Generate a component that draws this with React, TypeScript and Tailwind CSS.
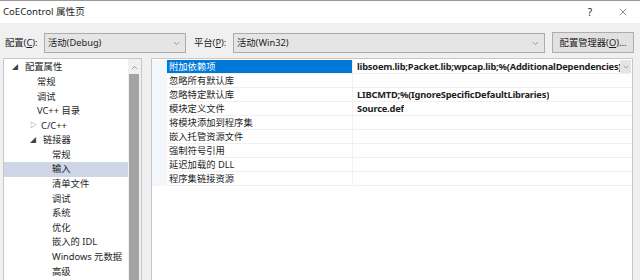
import { ChevronDown, ChevronUp, X } from 'lucide-react';

const font = { fontFamily: '"Noto Sans", "Noto Sans CJK SC", sans-serif' };

type TreeItem = { label: string; indent: number; arrow?: 'open' | 'closed'; selected?: boolean };

const tree: TreeItem[] = [
  { label: '配置属性', indent: 0, arrow: 'open' },
  { label: '常规', indent: 1 },
  { label: '调试', indent: 1 },
  { label: 'VC++ 目录', indent: 1 },
  { label: 'C/C++', indent: 1, arrow: 'closed' },
  { label: '链接器', indent: 1, arrow: 'open' },
  { label: '常规', indent: 2 },
  { label: '输入', indent: 2, selected: true },
  { label: '清单文件', indent: 2 },
  { label: '调试', indent: 2 },
  { label: '系统', indent: 2 },
  { label: '优化', indent: 2 },
  { label: '嵌入的 IDL', indent: 2 },
  { label: 'Windows 元数据', indent: 2 },
  { label: '高级', indent: 2 },
];

const props: { name: string; value?: string }[] = [
  { name: '附加依赖项', value: 'libsoem.lib;Packet.lib;wpcap.lib;%(AdditionalDependencies)' },
  { name: '忽略所有默认库' },
  { name: '忽略特定默认库', value: 'LIBCMTD;%(IgnoreSpecificDefaultLibraries)' },
  { name: '模块定义文件', value: 'Source.def' },
  { name: '将模块添加到程序集' },
  { name: '嵌入托管资源文件' },
  { name: '强制符号引用' },
  { name: '延迟加载的 DLL' },
  { name: '程序集链接资源' },
];

function Select({ value, width }: { value: string; width: string }) {
  return (
    <div className={`${width} h-[20px] bg-[#e5e5e5] border border-[#acacac] flex items-center pl-[3px] pr-[4px]`}>
      <span className="flex-1">{value}</span>
      <ChevronDown size={9} strokeWidth={1.5} className="text-[#606060]" />
    </div>
  );
}

export default function App() {
  return (
    <div
      className="w-[640px] h-[280px] overflow-hidden bg-[#f0f0f0] text-[9.3px] text-[#1e1e1e] border-t border-[#9a9a9a]"
      style={font}
    >
      {/* Title bar */}
      <div className="h-[22px] bg-white flex items-center pl-[3px]">
        <span className="flex-1 text-[9.6px]">CoEControl 属性页</span>
        <span className="w-[10px] text-center mr-[22px] text-[10px]">?</span>
        <X size={12} strokeWidth={1} className="mr-[11px]" />
      </div>

      {/* Toolbar */}
      <div className="h-[35px] flex items-start pt-[10px] pl-[5px]">
        <span className="mt-[3px] w-[39px]">
          配置(<u>C</u>):
        </span>
        <Select value="活动(Debug)" width="w-[142px]" />
        <span className="mt-[3px] ml-[8px] w-[39px]">
          平台(<u>P</u>):
        </span>
        <Select value="活动(Win32)" width="w-[312px]" />
        <div className="ml-[7px] -mt-[1px] w-[82px] h-[21px] bg-[#e1e1e1] border border-[#adadad] flex items-center justify-center">
          配置管理器(<u>O</u>)...
        </div>
      </div>

      {/* Panels */}
      <div className="flex pl-[3px] gap-[9px]">
        {/* Tree */}
        <div className="w-[139px] h-[230px] bg-white border border-[#c8c8c8] flex">
          <div className="flex-1 pt-[1px]">
            {tree.map((item, i) => (
              <div
                key={i}
                className={`h-[14.6px] flex items-center whitespace-nowrap ${item.selected ? 'bg-[#cdd5e6]' : ''}`}
                style={{ paddingLeft: item.indent === 0 ? 8 : item.indent === 1 ? (item.arrow ? 26 : 33) : 48 }}
              >
                {item.arrow === 'open' && <span className="text-[6px] w-[13px] text-[#404040]">◢</span>}
                {item.arrow === 'closed' && <span className="text-[7px] w-[11px] text-[#707070]">▷</span>}
                <span>{item.label}</span>
              </div>
            ))}
          </div>
          {/* scrollbar */}
          <div className="w-[13px] bg-[#f0f0f0] flex flex-col items-center">
            <ChevronUp size={9} strokeWidth={1.6} className="mt-[4px] text-[#606060]" />
            <div className="mt-[2px] w-[10px] flex-1 bg-[#a3a3a3] -ml-[2px]" />
          </div>
        </div>

        {/* Property grid */}
        <div className="w-[482px] h-[230px] bg-white border border-[#c8c8c8] pt-[1px]">
          {props.map((p, i) => (
            <div key={i} className="h-[14px] flex">
              <div className="w-[15px] bg-[#f3f6fb]" />
              <div
                className={`w-[185px] flex items-center pl-[2px] border-b border-[#f0f0f0] ${
                  i === 0 ? 'bg-[#0078d7] text-white' : ''
                }`}
              >
                {p.name}
              </div>
              <div className="flex-1 min-w-0 flex items-center border-b border-l border-[#f0f0f0] pl-[4px] font-bold tracking-[-0.2px] relative">
                <span className="whitespace-nowrap overflow-hidden">{p.value}</span>
                {i === 0 && (
                  <div className="absolute right-[1px] top-0 w-[11px] h-[13px] bg-[#e5e5e5] flex items-center justify-center">
                    <ChevronDown size={8} strokeWidth={1.5} className="text-[#606060]" />
                  </div>
                )}
              </div>
            </div>
          ))}
        </div>
      </div>
    </div>
  );
}
